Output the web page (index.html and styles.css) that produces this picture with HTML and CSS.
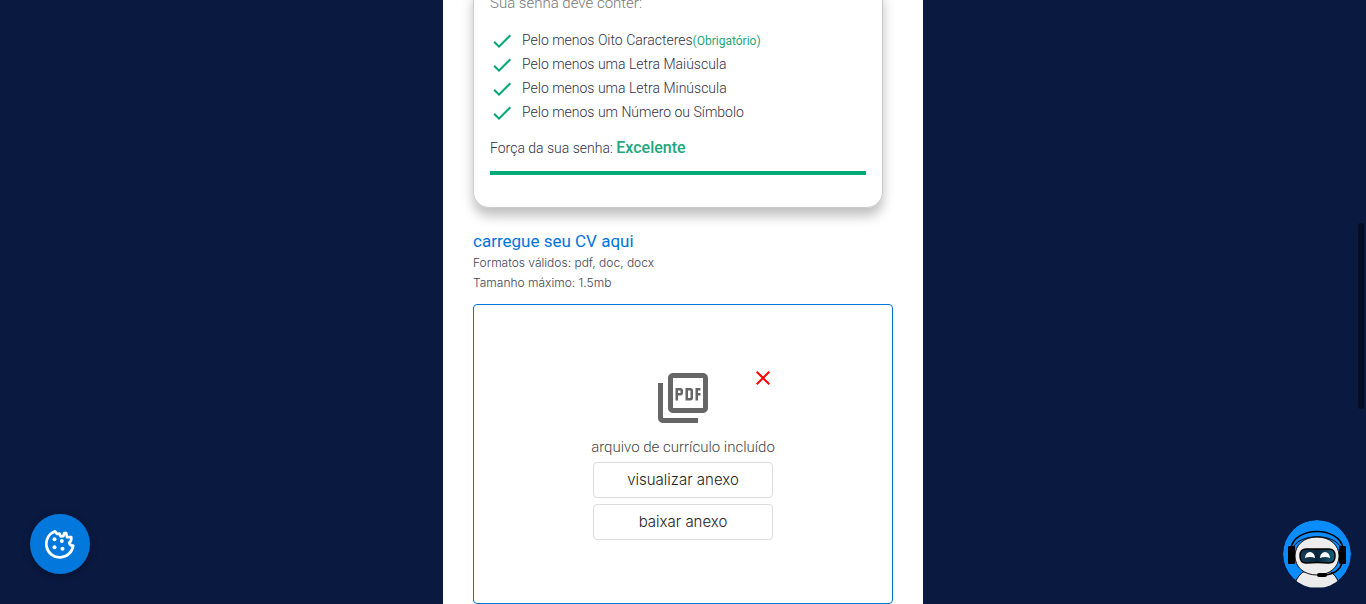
FILE: index.html
```html
<!DOCTYPE html>
<html lang="pt-BR">
<head>
<meta charset="utf-8">
<meta name="viewport" content="width=device-width, initial-scale=1">
<title>Cadastro</title>
<link rel="stylesheet" href="styles.css">
</head>
<body>
<svg class="sprite" aria-hidden="true">
  <symbol id="check" viewBox="0 0 24 24"><path d="M9 16.17 4.83 12l-1.42 1.41L9 19 21 7l-1.41-1.41z"/></symbol>
</svg>
<main class="panel">
  <section class="password-card">
    <p class="hint">Sua senha deve conter:</p>
    <ul class="rules">
      <li class="rule"><svg class="tick" aria-hidden="true"><use href="#check"/></svg><span>Pelo menos Oito Caracteres<span class="required">(Obrigatório)</span></span></li>
      <li class="rule"><svg class="tick" aria-hidden="true"><use href="#check"/></svg><span>Pelo menos uma Letra Maiúscula</span></li>
      <li class="rule"><svg class="tick" aria-hidden="true"><use href="#check"/></svg><span>Pelo menos uma Letra Minúscula</span></li>
      <li class="rule"><svg class="tick" aria-hidden="true"><use href="#check"/></svg><span>Pelo menos um Número ou Símbolo</span></li>
    </ul>
    <p class="strength">Força da sua senha: <strong class="strength-value">Excelente</strong></p>
    <div class="meter"></div>
  </section>
  <section class="cv">
    <h2 class="cv-title">carregue seu CV aqui</h2>
    <p class="cv-note">Formatos válidos: pdf, doc, docx</p>
    <p class="cv-note">Tamanho máximo: 1.5mb</p>
    <div class="upload">
      <div class="file">
        <svg class="pdf" viewBox="0 0 24 24" aria-hidden="true"><path d="M20 2H8c-1.100 0-2 .9-2 2v12c0 1.100.9 2 2 2h12c1.100 0 2-.9 2-2V4c0-1.100-.9-2-2-2zm0 14H8V4h12v12zM4 6H2v14c0 1.100.9 2 2 2h14v-2H4V6zm12 6V9c0-.55-.45-1-1-1h-2v5h2c.55 0 1-.45 1-1zm-2-3h1v3h-1V9zm4 2h1v-1h-1V9h1V8h-2v5h1zm-8 0h1c.55 0 1-.45 1-1V9c0-.55-.45-1-1-1H9v5h1v-2zm0-2h1v1h-1V9z"/></svg>
        <button class="remove" type="button" aria-label="Remover arquivo"><svg viewBox="0 0 24 24" aria-hidden="true"><path d="M19 6.410 17.590 5 12 10.590 6.410 5 5 6.410 10.590 12 5 17.590 6.410 19 12 13.410 17.590 19 19 17.590 13.410 12z"/></svg></button>
        <p class="file-label">arquivo de currículo incluído</p>
        <button class="file-button" type="button">visualizar anexo</button>
        <button class="file-button" type="button">baixar anexo</button>
      </div>
    </div>
  </section>
</main>
<button class="cookie" type="button" aria-label="Preferências de cookies">
  <svg viewBox="0 0 30 30" aria-hidden="true">
    <path d="M10 2.300A13.500 13.500 0 1 0 28.200 16.500c-2 .1-3.700-1.100-4-3 2-.6 2.300-2.800 2-5.500l-4.200.2-.8-4.200-2 .2-.9 3-2.600.2-1.200-2.800-2.400.4z" fill="none" stroke="#fff" stroke-width="2.700" stroke-linejoin="round"/>
    <g fill="#fff"><circle cx="9.500" cy="10.200" r="2"/><circle cx="16.800" cy="12" r="2"/><circle cx="9.500" cy="18.300" r="2"/><circle cx="17.500" cy="19.800" r="2"/></g>
  </svg>
</button>
<button class="bot" type="button" aria-label="Assistente virtual">
  <svg viewBox="0 0 68 68" aria-hidden="true">
    <defs><clipPath id="disc"><circle cx="34" cy="34" r="34"/></clipPath><linearGradient id="visor"><stop stop-color="#183d59"/><stop offset=".5" stop-color="#07243b"/><stop offset="1" stop-color="#176078"/></linearGradient></defs>
    <g clip-path="url(#disc)">
      <circle cx="34" cy="34" r="34" fill="#0a8cff"/>
      <path d="M11 68c1-7 4-12 9-16h28c5 4 8 9 9 16z" fill="#ececec" stroke="#000"/>
      <path d="M34 17c13 0 22 8 22 19S47 55 34 55 12 47 12 36s9-19 22-19z" fill="#ededed" stroke="#111"/>
      <path d="M8 28c4-22 48-22 52 0" fill="none" stroke="#000" stroke-width="1.700"/>
      <path d="M10 28c6-15 42-15 48 0" fill="none" stroke="#000"/>
      <rect x="5" y="26" width="7" height="18" rx="1"/><rect x="56" y="26" width="7" height="18" rx="1"/>
      <path d="M59 43c-2 7-8 11-17 12" fill="none" stroke="#000" stroke-width="1.500"/>
      <rect x="34" y="53" width="10" height="4" rx="2"/>
      <path d="M23 29h23c4 0 6 2 6 7s-2 7-6 7q-12-1-23 0c-4 0-6-2-6-7s2-7 6-7z" fill="url(#visor)" stroke="#000" stroke-width="1.500"/>
      <path d="M22 38a5 6 0 0 1 10 0q-5-2-10 0zm15 0a5 6 0 0 1 10 0q-5-2-10 0z" fill="#fff"/>
    </g>
  </svg>
</button>
<div class="scroll-thumb"></div>
</body>
</html>
```
FILE: styles.css
```css
* { box-sizing: border-box; }
body {
  margin: 0;
  min-height: 100vh;
  overflow: hidden;
  background: #091940;
  font-family: Roboto, "Liberation Sans", sans-serif;
  font-weight: 300;
}
p, h2, ul { margin: 0; padding: 0; }
button { font: inherit; cursor: pointer; }
.sprite { display: none; }
.panel {
  max-width: 480px;
  margin: 0 auto;
  padding: 0 30px;
  background: #fff;
}
.password-card {
  margin-right: 10px;
  padding: 0 16px 32px;
  border: 1px solid #ccc;
  border-top: 0;
  border-radius: 0 0 16px 16px;
  box-shadow: 0 8px 12px rgba(0, 0, 0, .25);
}
.hint {
  margin-top: -9px;
  font-size: 15px;
  line-height: 24px;
  color: #777;
}
.rules { margin-top: 14px; list-style: none; }
.rule {
  display: flex;
  gap: 8px;
  font-size: 14px;
  line-height: 23px;
  height: 24px;
  color: #303045;
}
.tick { width: 24px; height: 24px; fill: #00a878; }
.required { font-size: 12px; font-weight: 400; color: #1fa67d; }
.strength {
  margin-top: 12px;
  font-size: 14px;
  line-height: 22px;
  color: #303045;
}
.strength-value { font-size: 16px; font-weight: 500; color: #1fa67d; }
.meter { height: 4px; margin-top: 12px; background: #00ab77; }
.cv { padding-top: 21px; }
.cv-title {
  font-size: 17px;
  line-height: 24px;
  font-weight: 400;
  color: #0073dc;
}
.cv-note {
  font-family: Inter, Roboto, sans-serif;
  font-size: 12px;
  line-height: 20px;
  color: #404656;
}
.upload {
  display: flex;
  align-items: center;
  justify-content: center;
  min-height: 300px;
  margin-top: 11px;
  border: 1px solid #0076d6;
  border-radius: 4px;
}
.file {
  position: relative;
  display: flex;
  flex-direction: column;
  width: 180px;
}
.pdf { width: 60px; height: 60px; align-self: center; fill: #666; }
.remove {
  position: absolute;
  top: -2px;
  right: -2px;
  width: 24px;
  height: 24px;
  padding: 0;
  border: 0;
  background: none;
}
.remove svg { display: block; fill: #f00; }
.file-label {
  margin: 8px -4px 0;
  font-size: 15px;
  line-height: 22px;
  text-align: center;
  white-space: nowrap;
  color: #444;
}
.file-button {
  height: 36px;
  margin-top: 4px;
  padding: 0 0 2px;
  border: 1px solid #ddd;
  border-radius: 4px;
  background: #fff;
  font-family: Inter, Roboto, sans-serif;
  font-size: 15px;
  color: #222;
}
.file-button + .file-button { margin-top: 6px; }
.cookie {
  position: fixed;
  left: 30px;
  bottom: 30px;
  display: grid;
  place-items: center;
  width: 60px;
  height: 60px;
  padding: 0;
  border: 0;
  border-radius: 50%;
  background: #0378dc;
  box-shadow: 0 2px 8px rgba(0, 0, 0, .3);
}
.cookie svg { width: 30px; height: 30px; }
.bot {
  position: fixed;
  right: 15px;
  bottom: 16px;
  width: 68px;
  height: 68px;
  padding: 0;
  border: 0;
  border-radius: 50%;
  background: none;
}
.bot svg { display: block; }
.scroll-thumb {
  position: fixed;
  top: 37vh;
  right: 2px;
  width: 6px;
  height: 186px;
  border-radius: 3px;
  background: #040e25;
}
```
